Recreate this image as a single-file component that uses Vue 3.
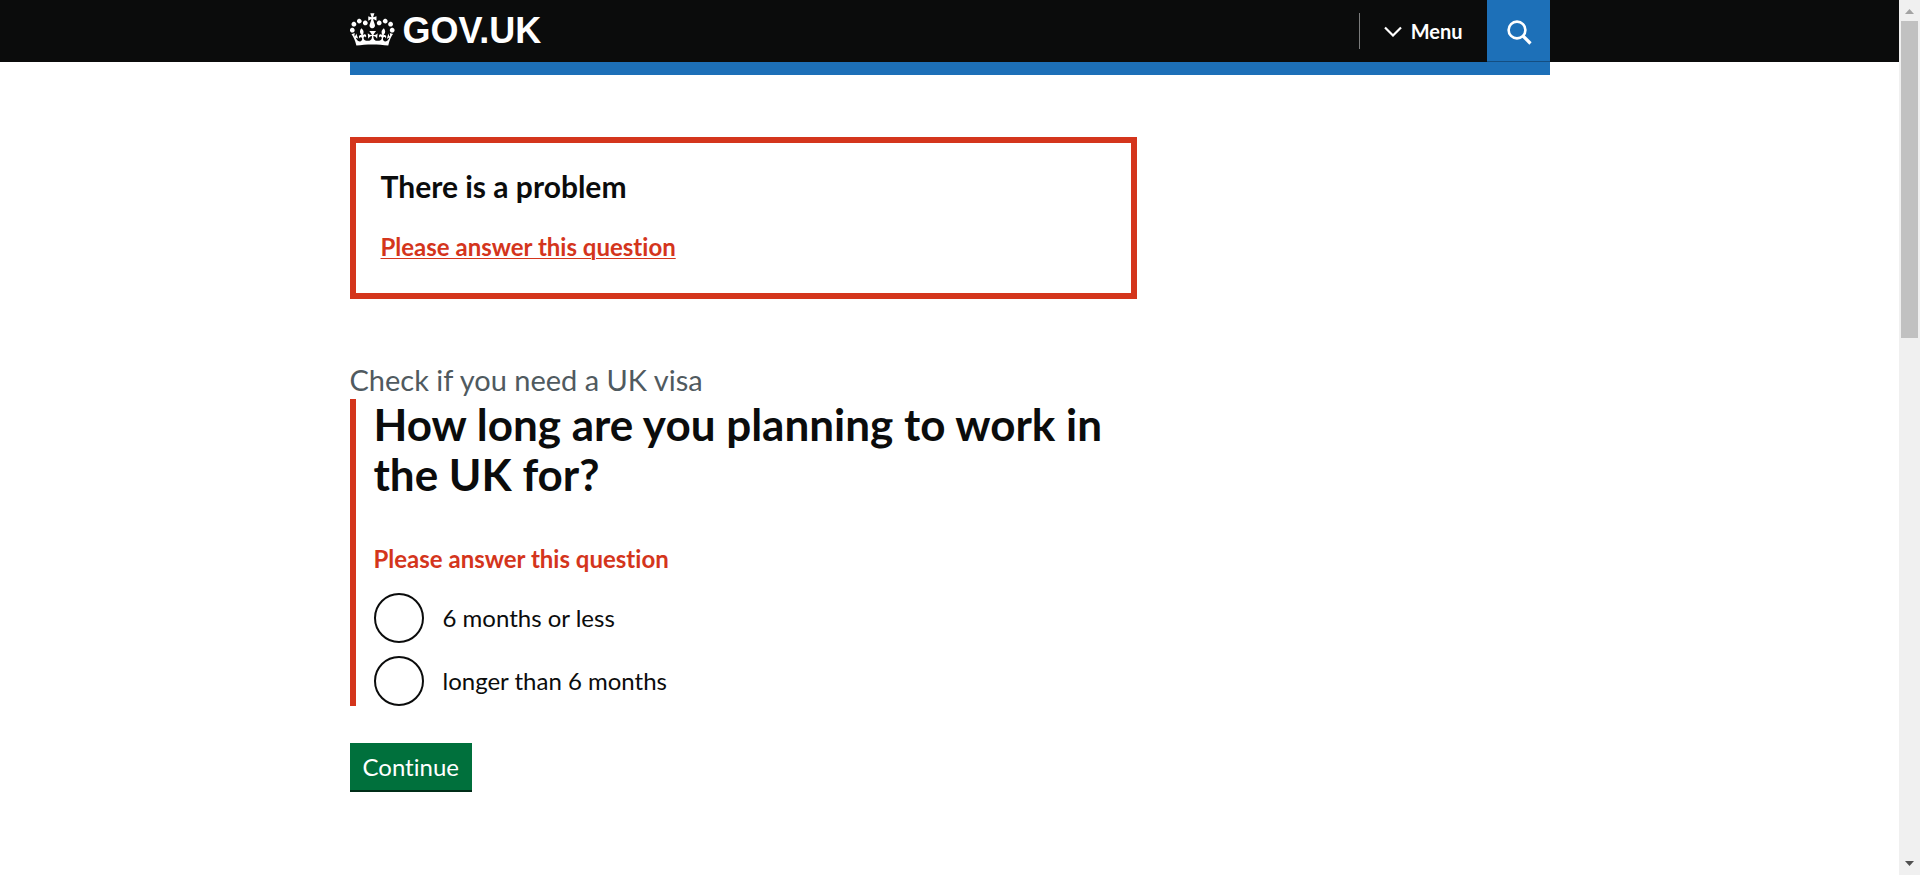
<script setup>
import { ref } from 'vue'

const duration = ref('')
const options = [
  { value: 'six_months_or_less', label: '6 months or less' },
  { value: 'longer_than_six_months', label: 'longer than 6 months' }
]
</script>

<template>
  <div class="screen">
    <div class="page">
      <header class="header">
        <div class="container header-inner">
          <a class="logo" href="#" aria-label="GOV.UK homepage">
            <svg class="crown" viewBox="0 0 36 32" width="45" height="40" aria-hidden="true">
              <path fill="currentColor" d="M6.7 12.2c1 .4 2.1-.1 2.5-1s-.1-2.1-1-2.5c-1-.4-2.1.1-2.5 1-.4 1 0 2.1 1 2.5m-4.3 2.5c1 .4 2.1-.1 2.5-1s-.1-2.1-1-2.5c-1-.4-2.1.1-2.5 1-.5 1 0 2.1 1 2.5m-1.3 4.8c1 .4 2.1-.1 2.5-1 .4-1-.1-2.1-1-2.5-1-.4-2.1.1-2.5 1-.4 1 0 2.1 1 2.5m10.4-5.8c1 .4 2.1-.1 2.5-1s-.1-2.1-1-2.5c-1-.4-2.1.1-2.5 1s0 2.1 1 2.5m17.4-1.5c-1 .4-2.1-.1-2.5-1s.1-2.1 1-2.5c1-.4 2.1.1 2.5 1 .5 1 0 2.1-1 2.5m4.3 2.5c-1 .4-2.1-.1-2.5-1s.1-2.1 1-2.5c1-.4 2.1.1 2.5 1 .5 1 0 2.1-1 2.5m1.3 4.8c-1 .4-2.1-.1-2.5-1-.4-1 .1-2.1 1-2.5 1-.4 2.1.1 2.5 1 .4 1 0 2.1-1 2.5m-10.4-5.8c-1 .4-2.1-.1-2.5-1s.1-2.1 1-2.5c1-.4 2.1.1 2.5 1s0 2.1-1 2.5m-5.3-4.9 2.4 1.3V6.5l-2.4.8c-.1-.1-.1-.1-.2-.1s1-3 1-3h-3.4l1 3c-.1.1-.2.1-.2.1-.1.1-2.4-.7-2.4-.7v3.5L17 8.8c-.1.1 0 .2.1.3l-1.4 4.2c-.1.2-.1.4-.1.7 0 1.1.8 2.1 1.9 2.2h.6C19.2 16 20 15.1 20 14c0-.2 0-.4-.1-.7l-1.4-4.2c.2-.1.3-.2.3-.3m-1 20.3c4.6 0 8.9.3 12.8.9 1.1-4.6 2.4-7.2 3.8-9.1l-2.6-.9c.3 1.3.3 1.9 0 2.8-.4-.4-.8-1.2-1.1-2.4l-1.2 4.2c.8-.5 1.4-.9 2-.9-1.2 2.6-2.7 3.2-3.6 3-1.2-.2-1.7-1.3-1.5-2.3.3-1.3 1.6-1.6 2.2-.1 1.2-2.4-.8-3.1-2.1-2.4 1.9-1.9 2.2-3.6.6-5.7-2.2 1.7-2.2 3.3-1.2 5.6-1.3-1.5-3.3-.7-2.5 1.7.9-1.4 2.1-.5 2 .8-.2 1.2-1.7 2.1-3.7 1.9-2.8-.2-2.9-2.2-3-3.7.7-.1 1.9.5 3 2l.4-4.4c-1.1 1.2-2.2 1.4-3.3 1.4.4-1.2 2.1-3.1 2.1-3.1h-5.5s1.8 2 2.1 3.1c-1.1 0-2.2-.3-3.3-1.4l.4 4.4c1.1-1.5 2.3-2.1 3-2-.1 1.6-.2 3.5-3 3.7-1.9.2-3.5-.7-3.7-1.9-.2-1.3 1-2.2 1.9-.8.7-2.4-1.3-3.1-2.6-1.7 1-2.3 1-4-1.2-5.6-1.6 2.1-1.3 3.8.6 5.7-1.3-.7-3.2 0-2.1 2.4.6-1.5 1.9-1.1 2.2.1.2.9-.4 2.1-1.5 2.3-1 .2-2.5-.5-3.6-3 .7 0 1.3.4 2 .9L5 20.4c-.3 1.2-.7 1.9-1.2 2.4-.3-.8-.2-1.5 0-2.8l-2.6.9C2.7 22.8 4 25.4 5.1 30c3.8-.6 8.2-.9 12.7-.9" />
            </svg>
            <span class="logotype">GOV.UK</span>
          </a>
          <nav class="nav" aria-label="Main">
            <button class="menu-button" type="button">
              <svg viewBox="0 0 18 12" width="18" height="12" aria-hidden="true">
                <path d="M1 2.500 9 10.500 17 2.500" fill="none" stroke="currentColor" stroke-width="2.200" />
              </svg>
              <span>Menu</span>
            </button>
            <button class="search-button" type="button" aria-label="Search GOV.UK">
              <svg viewBox="0 0 26 26" width="26" height="26" aria-hidden="true">
                <circle cx="11" cy="11" r="8.400" fill="none" stroke="currentColor" stroke-width="2.600" />
                <path d="M17 17 24.500 24.500" fill="none" stroke="currentColor" stroke-width="3.200" />
              </svg>
            </button>
          </nav>
        </div>
      </header>

      <div class="container">
        <div class="blue-bar"></div>
        <main class="main">
          <section class="error-summary" role="alert" aria-labelledby="summary-title">
            <h2 id="summary-title" class="summary-title">There is a problem</h2>
            <a class="summary-link" href="#option-0">Please answer this question</a>
          </section>

          <form @submit.prevent>
            <span class="caption">Check if you need a UK visa</span>
            <div class="group">
              <fieldset class="fieldset" aria-describedby="question-error">
                <legend class="legend">
                  <h1 class="title">How long are you planning to work in the UK for?</h1>
                </legend>
                <p id="question-error" class="error-message">Please answer this question</p>
                <div class="radios">
                  <div v-for="(option, i) in options" :key="option.value" class="radio-row">
                    <input :id="`option-${i}`" v-model="duration" class="radio" type="radio" name="duration" :value="option.value" />
                    <label :for="`option-${i}`">{{ option.label }}</label>
                  </div>
                </div>
              </fieldset>
            </div>
            <button class="continue" type="submit">Continue</button>
          </form>
        </main>
      </div>
    </div>

    <div class="scrollbar" aria-hidden="true">
      <svg class="arrow-up" viewBox="0 0 9 5" width="9" height="5"><path d="M4.500 0 9 5H0z" /></svg>
      <div class="track"><div class="thumb"></div></div>
      <svg class="arrow-down" viewBox="0 0 9 5" width="9" height="5"><path d="M0 0h9L4.500 5z" /></svg>
    </div>
  </div>
</template>

<style>
body {
  margin: 0;
  background: #fff;
}
</style>

<style scoped>
.screen {
  display: flex;
  min-height: 100vh;
  color: #0b0c0c;
  font-family: Lato, "Liberation Sans", sans-serif;
  font-size: 24px;
  line-height: 32px;
  font-variant-ligatures: none;
}
.page {
  flex: 1;
  min-width: 0;
}
.container {
  max-width: 1200px;
  margin: 0 auto;
}
.header {
  background: #0b0c0c;
  color: #fff;
}
.header-inner {
  display: flex;
  justify-content: space-between;
  height: 62px;
}
.logo {
  display: flex;
  align-items: flex-start;
  gap: 8px;
  padding-top: 8px;
  color: #fff;
  text-decoration: none;
}
.logotype {
  font-family: "Liberation Sans", Arial, sans-serif;
  font-size: 36px;
  font-weight: 700;
  line-height: 46px;
}
.nav {
  display: flex;
  align-items: flex-start;
}
.menu-button {
  display: flex;
  align-items: center;
  gap: 9px;
  height: 36px;
  margin: 13px 0;
  padding: 0 24px;
  border: 0;
  border-left: 1px solid #7b7c7c;
  background: none;
  color: #fff;
  font: 700 20px/24px Lato, "Liberation Sans", sans-serif;
}
.search-button {
  display: flex;
  align-items: center;
  justify-content: center;
  width: 63px;
  height: 62px;
  padding: 2px 0 0 2px;
  border: 0;
  border-bottom: 1px solid #144e81;
  background: #1d70b8;
  color: #fff;
}
.blue-bar {
  height: 13px;
  background: #1d70b8;
}
.main {
  width: calc(66.66% - 12px);
  padding-top: 62px;
}
.error-summary {
  margin-bottom: 62px;
  padding: 25px;
  border: 6px solid #d4351c;
}
.summary-title {
  margin: 0 0 27px;
  font-size: 30px;
  line-height: 36px;
}
.summary-link {
  display: block;
  width: fit-content;
  margin-bottom: 5px;
  color: #d4351c;
  font-weight: 700;
  text-decoration: underline;
  text-decoration-thickness: 1px;
  text-underline-offset: 2px;
}
.caption {
  display: block;
  color: #505a5f;
  font-size: 29px;
  line-height: 38px;
}
.group {
  margin-bottom: 37px;
  padding-left: 18px;
  border-left: 6px solid #d4351c;
}
.fieldset {
  min-width: 0;
  margin: 0;
  padding: 0;
  border: 0;
}
.legend {
  padding: 0;
}
.title {
  margin: 0 0 44px;
  font-size: 44px;
  line-height: 50px;
}
.error-message {
  margin: 0 0 18px;
  color: #d4351c;
  font-weight: 700;
}
.radios {
  display: flex;
  flex-direction: column;
  gap: 13px;
}
.radio-row {
  display: flex;
  align-items: center;
  gap: 19px;
}
.radio {
  flex: none;
  appearance: none;
  width: 50px;
  height: 50px;
  margin: 0;
  border: 2px solid #0b0c0c;
  border-radius: 50%;
  background: #fff;
}
.radio:checked {
  box-shadow: inset 0 0 0 11px #fff;
  background: #0b0c0c;
}
.continue {
  display: block;
  padding: 8px 13px;
  border: 0;
  background: #00703c;
  box-shadow: 0 2px 0 #002d18;
  color: #fff;
  font: 400 24px/31px Lato, "Liberation Sans", sans-serif;
  font-variant-ligatures: none;
}
.scrollbar {
  position: sticky;
  top: 0;
  display: flex;
  flex-direction: column;
  align-items: center;
  box-sizing: border-box;
  width: 21px;
  height: 100vh;
  padding: 9px 0;
  background: #f0f0f0;
}
.track {
  flex: 1;
  width: 17px;
  margin: 7px 0;
}
.thumb {
  height: 38%;
  min-height: 21px;
  background: #c1c1c1;
}
.arrow-up {
  fill: #a3a3a3;
}
.arrow-down {
  fill: #505050;
}
</style>
